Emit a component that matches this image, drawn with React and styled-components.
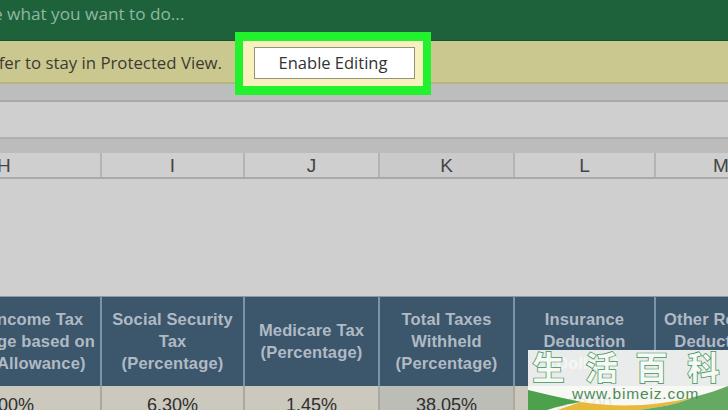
import React from 'react'
import styled, { createGlobalStyle } from 'styled-components'

const Global = createGlobalStyle`
  html, body { margin: 0; padding: 0; background: #cfcfcf; }
  #root { width: 728px; height: 410px; overflow: hidden; }
`

const Page = styled.div`
  width: 728px;
  height: 410px;
  position: relative;
  overflow: hidden;
  display: flex;
  flex-direction: column;
  background: #cfcfcf;
  font-family: "Open Sans", "Liberation Sans", sans-serif;
`

const TitleBar = styled.div`
  height: 41px;
  flex: none;
  box-sizing: border-box;
  background: #1e623c;
  border-bottom: 1px solid #1a5030;
  color: #8fb7a2;
  font-size: 17.2px;
  line-height: 28px;
  white-space: nowrap;
  text-indent: -7px;
`

const InfoBar = styled.div`
  height: 43px;
  flex: none;
  box-sizing: border-box;
  background: #cbc88f;
  border-bottom: 2px solid #b8b67f;
  display: flex;
  align-items: center;
  color: #3b3b33;
  font-size: 16.8px;
  white-space: nowrap;
`

const InfoText = styled.span`
  width: 222px;
  flex: none;
  display: flex;
  justify-content: flex-end;
  overflow: hidden;
  padding-top: 2px;
`

const Highlight = styled.div`
  position: absolute;
  left: 235px;
  top: 32px;
  width: 196px;
  height: 63px;
  box-sizing: border-box;
  border: solid #22f22e;
  border-width: 9px 8px;
  padding: 0 0 2px 11px;
  background: #f6f1bd;
  display: flex;
  align-items: center;
`

const EnableButton = styled.button`
  width: 161px;
  height: 32px;
  box-sizing: border-box;
  margin: 0;
  padding: 0 3px 1px 0;
  background: #fff;
  border: 1px solid #94917f;
  color: #333;
  font: 16.5px "Open Sans", "Liberation Sans", sans-serif;
`

const RibbonStrip = styled.div`
  height: 16px;
  flex: none;
  background: #bcbdbd;
  border-bottom: 2px solid #a9a9a9;
`

const FormulaBar = styled.div`
  height: 35px;
  flex: none;
  background: #cfcfcf;
  border-bottom: 2px solid #b0b0b0;
`

const GapStrip = styled.div`
  height: 14px;
  flex: none;
  background: #bcbcbc;
`

const Columns = styled.div`
  height: 26px;
  flex: none;
  box-sizing: border-box;
  display: flex;
  background: #cfcfcf;
  border-bottom: 2px solid #a9a9a9;
  margin-bottom: 117px;
`

const ColHead = styled.div`
  width: ${p => p.$w}px;
  flex: none;
  box-sizing: border-box;
  text-align: ${p => p.$align || 'center'};
  text-indent: ${p => (p.$align ? '-3px' : 0)};
  border-right: ${p => (p.$last ? 0 : '2px solid #b4b4b4')};
  background: ${p => (p.$active ? '#cacaca' : 'transparent')};
  color: #444;
  font: 19px/25px "Liberation Sans", Arial, sans-serif;
  overflow: hidden;
  white-space: nowrap;
`

const Table = styled.div`
  display: flex;
  flex: none;
`

const Column = styled.div`
  width: ${p => p.$w}px;
  flex: none;
  display: flex;
  flex-direction: column;
`

const HeadCell = styled.div`
  height: 90px;
  box-sizing: border-box;
  padding-bottom: 2px;
  background: #3c566c;
  border-right: 2px solid #7b93a8;
  border-top: 1px solid #8a9aa8;
  display: flex;
  align-items: center;
  justify-content: ${p => (p.$align === 'left' ? 'flex-start' : 'center')};
  text-align: ${p => p.$align || 'center'};
  text-indent: ${p => (p.$align ? '-3px' : 0)};
  color: #b0bac4;
  font: bold 16.5px/22px "Liberation Sans", Arial, sans-serif;
  letter-spacing: 0.15px;
  white-space: nowrap;
  overflow: hidden;
`

const ValueCell = styled.div`
  flex: 1;
  height: 30px;
  box-sizing: border-box;
  padding-top: 9px;
  background: ${p => (p.$shade ? '#bdbdb8' : '#cbc8bd')};
  border-right: 2px solid #a9a9a2;
  text-align: ${p => p.$align || 'center'};
  text-indent: ${p => (p.$align ? '-2px' : 0)};
  color: #2e2e2e;
  font: 18px/20px "Liberation Sans", Arial, sans-serif;
  white-space: nowrap;
  overflow: hidden;
`

const Watermark = styled.div`
  position: absolute;
  left: 528px;
  top: 350px;
  width: 200px;
  height: 60px;
  background: rgba(253, 253, 250, 0.9);
  overflow: hidden;
`

const WatermarkGlyphs = styled.div`
  position: absolute;
  left: 0;
  top: 0;
  font: 900 33px/38px "Noto Sans CJK SC", sans-serif;
  color: #f6f9f4;
  -webkit-text-stroke: 0.7px #3f9459;
`

const Glyph = styled.span`
  position: absolute;
  top: -3px;
  left: ${p => p.$x}px;
`

const WatermarkUrl = styled.div`
  position: absolute;
  left: 44px;
  top: 35px;
  color: #4d8a5c;
  font: 15.5px/18px "Liberation Sans", Arial, sans-serif;
  letter-spacing: 0.85px;
  white-space: nowrap;
`

const Swoosh = styled.svg`
  position: absolute;
  left: 0;
  bottom: 0;
  opacity: 0.92;
`

const columns = [
  { w: 102, letter: 'H', align: 'left', head: ['ncome Tax', 'ge based on', 'Allowance)'], value: '00%' },
  { w: 143, letter: 'I', head: ['Social Security', 'Tax', '(Percentage)'], value: '6.30%' },
  { w: 135, letter: 'J', head: ['Medicare Tax', '(Percentage)'], value: '1.45%' },
  { w: 135, letter: 'K', head: ['Total Taxes', 'Withheld', '(Percentage)'], value: '38.05%', shade: true, active: true },
  { w: 141, letter: 'L', head: ['Insurance', 'Deduction', '(Dollars)'], value: '$20.00' },
  { w: 130, letter: 'M', head: ['Other Regular', 'Deductions', ''], value: '', last: true },
]

const glyphs = [
  { ch: '生', x: 4 },
  { ch: '活', x: 57 },
  { ch: '百', x: 107 },
  { ch: '科', x: 159 },
]

const App = () => (
  <Page>
    <Global />
    <TitleBar>e what you want to do...</TitleBar>
    <InfoBar>
      <InfoText>fer to stay in Protected View.</InfoText>
    </InfoBar>
    <RibbonStrip />
    <FormulaBar />
    <GapStrip />
    <Columns>
      {columns.map(c => (
        <ColHead key={c.letter} $w={c.w} $last={c.last} $active={c.active} $align={c.align}>
          {c.letter}
        </ColHead>
      ))}
    </Columns>
    <Table>
      {columns.map(c => (
        <Column key={c.letter} $w={c.w}>
          <HeadCell $align={c.align}>
            <div>
              {c.head.map((line, i) => (
                <div key={i}>{line || '\u00a0'}</div>
              ))}
            </div>
          </HeadCell>
          <ValueCell $shade={c.shade} $align={c.align}>{c.value}</ValueCell>
        </Column>
      ))}
    </Table>
    <Highlight>
      <EnableButton>Enable Editing</EnableButton>
    </Highlight>
    <Watermark>
      <WatermarkGlyphs>
        {glyphs.map(g => (
          <Glyph key={g.ch} $x={g.x}>{g.ch}</Glyph>
        ))}
      </WatermarkGlyphs>
      <Swoosh width="200" height="24" viewBox="0 0 200 24">
        <path d="M0 4 C20 9 40 13 53 16 C40 18 28 21 19 24 L0 24 Z" fill="#3f9a3f" />
        <path d="M53 16 C90 22 130 20 166 11 C150 18 130 22 108 24 L30 24 C38 21 46 18 53 16 Z" fill="#e8b52a" />
        <path d="M166 11 C178 8 190 4 200 0 L200 24 L108 24 C130 22 150 18 166 11 Z" fill="#5aa356" />
      </Swoosh>
      <WatermarkUrl>www.bimeiz.com</WatermarkUrl>
    </Watermark>
  </Page>
)

export default App
